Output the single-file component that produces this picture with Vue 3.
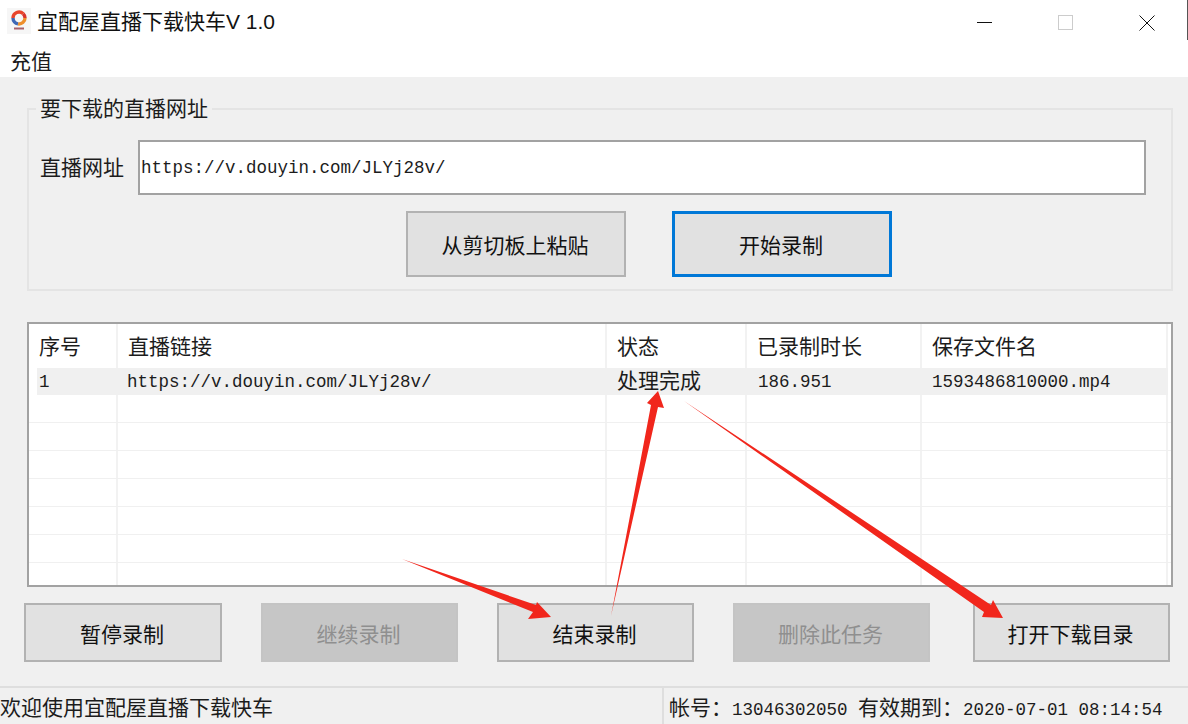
<template>
  <div class="window">
    <header class="title-bar">
      <svg class="logo" width="24" height="26" viewBox="0 0 24 26">
        <rect width="24" height="26" fill="#f6f6f6" />
        <path d="M6 10a6 6 0 0 1 10.200-4.300" fill="none" stroke="#e8452c" stroke-width="3.400" />
        <path d="M16.200 5.700a6 6 0 0 1 1.800 4.300" fill="none" stroke="#d9342b" stroke-width="3.400" />
        <path d="M18 10a6 6 0 0 1-7 5.900" fill="none" stroke="#ee8f2c" stroke-width="3.400" />
        <path d="M11 15.900a6 6 0 0 1-5-5.900" fill="none" stroke="#3f68b5" stroke-width="3.400" />
        <rect x="7" y="19.500" width="10" height="2" fill="#a8606a" />
      </svg>
      <span class="title">宜配屋直播下载快车<span class="title-ver">V 1.0</span></span>
      <div class="win-controls">
        <svg width="16" height="16" viewBox="0 0 16 16"><path d="M0 7.500h15" stroke="#111" fill="none" /></svg>
        <svg width="16" height="16" viewBox="0 0 16 16"><rect x="0.500" y="0.500" width="14" height="14" stroke="#ccc" fill="none" /></svg>
        <svg width="16" height="16" viewBox="0 0 16 16"><path d="M0.500 0.500l15 15M15.500 0.500l-15 15" stroke="#111" fill="none" /></svg>
      </div>
    </header>
    <nav class="menu-bar"><span>充值</span></nav>

    <main class="main">
      <section class="group">
        <span class="legend">要下载的直播网址</span>
        <div class="url-row">
          <label class="url-label">直播网址</label>
          <input class="url-input" type="text" readonly value="https://v.douyin.com/JLYj28v/" />
        </div>
        <div class="url-actions">
          <button class="btn btn-big">从剪切板上粘贴</button>
          <button class="btn btn-big btn-focus">开始录制</button>
        </div>
      </section>

      <section class="list">
        <div class="row head">
          <div v-for="h in headers" :key="h" class="cell">{{ h }}</div>
        </div>
        <div class="row first">
          <div class="cell mono">1</div>
          <div class="cell mono">https://v.douyin.com/JLYj28v/</div>
          <div class="cell">处理完成</div>
          <div class="cell mono">186.951</div>
          <div class="cell mono">1593486810000.mp4</div>
        </div>
        <div v-for="n in 7" :key="n" class="row empty">
          <div v-for="c in 5" :key="c" class="cell"></div>
        </div>
      </section>

      <div class="actions">
        <button v-for="b in actions" :key="b.text" class="btn" :class="{ off: b.off }">{{ b.text }}</button>
      </div>
    </main>

    <footer class="status-bar">
      <span class="status-left">欢迎使用宜配屋直播下载快车</span>
      <span class="status-right">帐号&#65306;<span class="mono">13046302050 </span>有效期到&#65306;<span class="mono">2020-07-01 08:14:54</span></span>
    </footer>

    <svg class="arrows" width="1188" height="724" viewBox="0 0 1188 724">
      <polygon points="402,559 536,605 537,602 551,617 528,619 533,612" />
      <polygon points="611,616 651,405 647,403 658,391 664,408 658,407" />
      <polygon points="684,401 991,605 993,600 1003,618 982,617 984,612" />
    </svg>
  </div>
</template>

<script setup>
const headers = ['序号', '直播链接', '状态', '已录制时长', '保存文件名']
const actions = [
  { text: '暂停录制' },
  { text: '继续录制', off: true },
  { text: '结束录制' },
  { text: '删除此任务', off: true },
  { text: '打开下载目录' }
]
</script>

<style scoped>
.window {
  position: relative;
  display: flex;
  flex-direction: column;
  width: 1188px;
  height: 724px;
  overflow: hidden;
  background: #f0f0f0;
  font-family: "Noto Sans CJK SC", "Liberation Sans", sans-serif;
  font-size: 21px;
  color: #1c1c1c;
}

.title-bar {
  display: flex;
  align-items: center;
  height: 40px;
  padding-left: 7px;
  background: #fff;
  border-right: 1px solid #555;
}

.logo {
  margin-right: 6px;
  margin-top: 2px;
}

.title {
  color: #111;
  line-height: 40px;
  margin-top: 2px;
}

.title-ver {
  font-family: "Liberation Sans", sans-serif;
  font-size: 21px;
}

.win-controls {
  display: flex;
  gap: 65px;
  margin-left: auto;
  margin-right: 32px;
  margin-top: 5px;
}

.menu-bar {
  height: 37px;
  padding-left: 10px;
  line-height: 40px;
  background: #fff;
}

.main {
  flex: 1;
  padding: 31px 15px 0 27px;
}

.group {
  position: relative;
  height: 183px;
  padding: 30px 25px 0 11px;
  box-sizing: border-box;
  border: 2px solid #e4e4e4;
}

.legend {
  position: absolute;
  top: -18px;
  left: 7px;
  padding: 0 4px;
  line-height: 30px;
  background: #f0f0f0;
}

.url-row {
  display: flex;
  align-items: center;
}

.url-label {
  width: 98px;
  flex-shrink: 0;
  padding-bottom: 4px;
}

.url-input {
  flex: 1;
  height: 55px;
  box-sizing: border-box;
  padding: 0 1px;
  border: 2px solid #a2a2a2;
  outline: none;
  background: #fff;
  color: #1c1c1c;
  font-family: "Liberation Mono", monospace;
  font-size: 17.5px;
}

.url-actions {
  display: flex;
  gap: 46px;
  margin-top: 16px;
  padding-left: 366px;
}

.btn {
  width: 197px;
  height: 59px;
  padding: 0 2px 0 0;
  box-sizing: border-box;
  border: 2px solid #b2b2b2;
  background: #e1e1e1;
  color: #111;
  font-family: inherit;
  font-size: 21px;
}

.btn-big {
  width: 220px;
  height: 66px;
}

.btn-focus {
  border: 3px solid #0078d7;
}

.off {
  border-color: #c4c4c4;
  background: #c6c6c6;
  color: #8f8f8f;
}

.list {
  height: 265px;
  margin-top: 31px;
  box-sizing: border-box;
  overflow: hidden;
  border: 2px solid #a2a2a2;
  background: #fff;
}

.row {
  display: grid;
  grid-template-columns: 89px 489px 140px 175px 246px;
  height: 28px;
  box-sizing: border-box;
  line-height: 27px;
  border-bottom: 1px solid #f0f0f0;
}

.cell {
  padding-left: 10px;
  box-sizing: border-box;
  border-right: 2px solid #f2f2f2;
  white-space: nowrap;
}

.head {
  height: 44px;
  line-height: 42px;
  border-bottom: none;
}

.first {
  height: 27px;
  margin: 0 3px 0 8px;
  grid-template-columns: 80px 490px 141px 174px 246px;
  line-height: 23px;
  background: #f0f0f0;
  border-bottom: none;
}

.first .cell {
  border-right: none;
}

.first .cell:first-child {
  padding-left: 2px;
}

.first .mono {
  line-height: 29px;
}

.mono {
  font-family: "Liberation Mono", monospace;
  font-size: 17.5px;
}

.actions {
  display: flex;
  gap: 39px;
  margin: 16px 0 0 -3px;
}

.actions .btn:first-child {
  width: 198px;
}

.actions .btn:last-child {
  margin-left: 4px;
}

.status-bar {
  display: flex;
  height: 38px;
  box-sizing: border-box;
  border-top: 2px solid #dedede;
  line-height: 36px;
}

.status-left {
  width: 662px;
  flex-shrink: 0;
}

.status-right {
  flex: 1;
  padding-left: 5px;
  border-left: 2px solid #dedede;
  white-space: nowrap;
}

.arrows {
  position: absolute;
  top: 0;
  left: 0;
  fill: #f1261c;
  pointer-events: none;
}
</style>

<style>
html, body {
  margin: 0;
  overflow: hidden;
}
</style>
